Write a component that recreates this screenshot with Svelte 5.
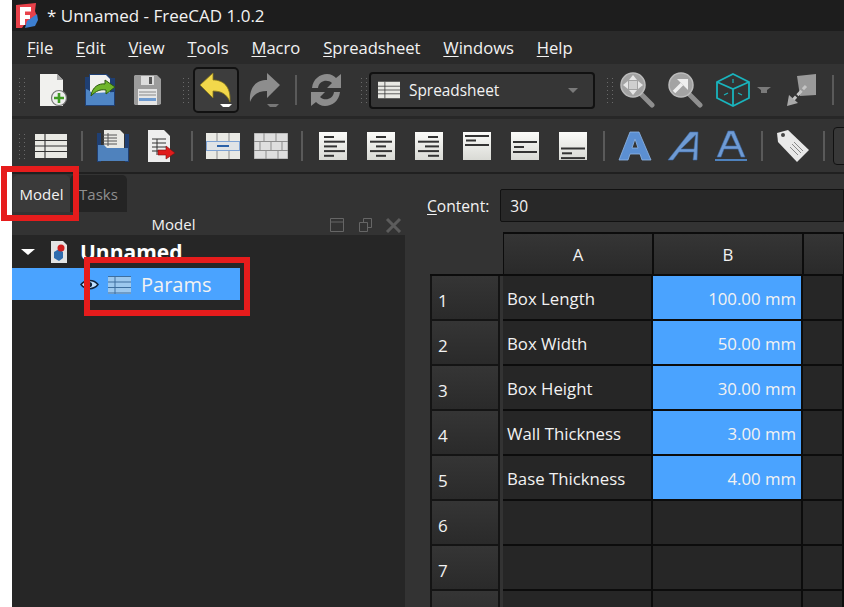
<script>
	// FreeCAD spreadsheet window with two red call-out boxes on top
	const menus = [
		['F', 'ile'], ['E', 'dit'], ['V', 'iew'], ['T', 'ools'],
		['M', 'acro'], ['S', 'preadsheet'], ['W', 'indows'], ['H', 'elp']
	];

	const aligns = [
		{ top: 4, step: 4.7, lines: [[5, 15], [5, 26], [5, 18], [5, 26], [5, 15]] },
		{ top: 4, step: 4.7, lines: [[9, 19], [3, 25], [9, 19], [3, 25], [9, 19]] },
		{ top: 4, step: 4.7, lines: [[13, 23], [3, 24], [10, 24], [3, 24], [13, 24]] },
		{ top: 3, step: 4.5, lines: [[2, 26], [3, 13], [2, 26]] },
		{ top: 9, step: 5, lines: [[2, 26], [3, 13], [2, 26]] },
		{ top: 15.500, step: 4.8, lines: [[2, 26], [3, 13], [2, 26]] }
	];

	const rows = [
		['1', 'Box Length', '100.00 mm'],
		['2', 'Box Width', '50.00 mm'],
		['3', 'Box Height', '30.00 mm'],
		['4', 'Wall Thickness', '3.00 mm'],
		['5', 'Base Thickness', '4.00 mm'],
		['6', '', ''],
		['7', '', ''],
		['', '', '']
	];
</script>

{#snippet grip()}
	<svg class="grip" width="6" height="26" viewBox="0 0 6 26">
		{#each [1, 5, 9, 13, 17, 21, 25] as y}
			<rect x="0" {y} width="1" height="1" fill="#6a6a6a" />
			<rect x="5" {y} width="1" height="1" fill="#6a6a6a" />
		{/each}
	</svg>
{/snippet}

{#snippet tablet(w, h)}
	<svg width={w} height={h} viewBox="0 0 32 24">
		<rect width="32" height="24" fill="#e9e9e4" />
		<path d="M0 6.500h32M0 12h32M0 17.500h32M10 0v24" stroke="#333" stroke-width="1.100" />
	</svg>
{/snippet}

{#snippet lens()}
	<path d="M21 21L33 33" stroke="#8f8f8f" stroke-width="5" stroke-linecap="round" />
	<circle cx="14" cy="13" r="12" fill="#a3a3a3" stroke="#bcbcbc" stroke-width="1.500" />
{/snippet}

<div class="win">
	<header class="titlebar">
		<svg width="22" height="25" viewBox="0 0 22 25">
			<path d="M0 2L20 0L19 8L21 14L17 22L8 22L6 25L0 25Z" fill="#e8414a" />
			<path d="M9 25L11 18L21 11L22 17L19 23Z" fill="#3d7fd1" />
			<path d="M4 4H15V8.500H9V12H14V16H9V22H4Z" fill="#fff" />
		</svg>
		<span>* Unnamed - FreeCAD 1.0.2</span>
	</header>

	<nav class="menubar">
		{#each menus as [key, rest]}
			<span><u>{key}</u>{rest}</span>
		{/each}
	</nav>

	<div class="toolbar one">
		{@render grip()}
		<div class="group first">
			<div class="tool">
				<svg width="30" height="34" viewBox="0 0 30 34">
					<path d="M1 1H18L24 7V33H1Z" fill="#f1f1ee" />
					<path d="M18 1V7H24Z" fill="#a5a5a5" />
					<circle cx="20" cy="25" r="7.500" fill="#eee" stroke="#777" stroke-width="1.200" />
					<path d="M20 20V30M15 25H25" stroke="#3f9a22" stroke-width="2.600" />
				</svg>
			</div>
			<div class="tool">
				<svg width="33" height="34" viewBox="0 0 33 34">
					<path d="M1 4H5V1H23L27 5H31V33H1Z" fill="#1f3f73" />
					<path d="M6 2H22L26 6V20H6Z" fill="#f0f0ee" />
					<path d="M2 16C6 17 8 21 10 20L30 19V32H2Z" fill="#4f86c6" />
					<path d="M7 23C8 14 15 10 21 11V7L31 14L22 21V17C16 16 12 18 7 23Z" fill="#6fb52b" stroke="#2d5a10" stroke-width="1" />
				</svg>
			</div>
			<div class="tool">
				<svg width="29" height="32" viewBox="0 0 29 32">
					<path d="M2 1H24L28 5V30L26 31H2L1 30V2Z" fill="#9c9c9c" />
					<rect x="8" y="2" width="13" height="9" fill="#ddd" />
					<rect x="16" y="3" width="3" height="7" fill="#555" />
					<rect x="5" y="15" width="19" height="16" fill="#e5e5e5" />
					<path d="M6 18H23M6 21H23" stroke="#888" />
					<rect x="6" y="24" width="17" height="3" fill="#6f9bd0" />
				</svg>
			</div>
		</div>
		<div class="group gap-lg">{@render grip()}</div>
		<div class="group gap-sm">
			<div class="tool pressed">
				<svg width="34" height="38" viewBox="0 0 34 38">
					<path d="M1 14L14 2V9C24 9 32 15 31 31C28 23 22 20 14 20V27Z" fill="#f2d84b" stroke="#8a7a1c" stroke-width=".8" />
					<path d="M21 33H33L30 36H24Z" fill="#fff" />
				</svg>
			</div>
			<div class="tool">
				<svg width="34" height="38" viewBox="0 0 34 38">
					<path d="M32 14L19 2V9C9 9 1 15 2 31C5 23 11 20 19 20V27Z" fill="#8d8d8d" />
					<path d="M19 33H31L28 36H22Z" fill="#777" />
				</svg>
			</div>
		</div>
		<i class="sep"></i>
		<div class="tool refresh">
			<svg width="32" height="34" viewBox="0 0 32 34">
				<path d="M2 15C3 6 10 1 17 1C21 1 24 3 26 5L31 1V15H17L22 10C18 6 9 7 8 15Z" fill="#8c8c8c" />
				<path d="M30 19C29 28 22 33 15 33C11 33 8 31 6 29L1 33V19H15L10 24C14 28 23 27 24 19Z" fill="#8c8c8c" />
			</svg>
		</div>
		<div class="group gap-lg">{@render grip()}</div>
		<div class="combo">
			{@render tablet(22, 18)}
			<span>Spreadsheet</span>
			<svg class="caret" width="10" height="5" viewBox="0 0 10 5"><path d="M0 0H10L5 5Z" fill="#7a7a7a" /></svg>
		</div>
		<div class="group gap-lg">{@render grip()}</div>
		<div class="group">
			<div class="tool">
				<svg width="36" height="36" viewBox="0 0 36 36">
					{@render lens()}
					<rect x="10" y="9" width="8" height="8" fill="#cfcfcf" />
					<path d="M14 3L18 8H10ZM14 23L18 18H10ZM4 13L9 9V17ZM24 13L19 9V17Z" fill="#e6e6e6" />
				</svg>
			</div>
			<div class="tool">
				<svg width="36" height="36" viewBox="0 0 36 36">
					{@render lens()}
					<path d="M7 20L15 12" stroke="#eee" stroke-width="3.500" />
					<path d="M10 7H21V18Z" fill="#eee" />
				</svg>
			</div>
			<div class="tool">
				<svg width="34" height="34" viewBox="0 0 34 34">
					<path d="M17 1L33 9V25L17 33L1 25V9Z" fill="none" stroke="#19b4bd" stroke-width="1.800" />
					<path d="M1 9L17 16L33 9M17 16V33" fill="none" stroke="#19b4bd" stroke-width="1.800" />
					<path d="M17 6V10M8 22L12 20M26 22L22 20" stroke="#19b4bd" stroke-width="1.200" />
				</svg>
			</div>
			<div class="tool narrow">
				<svg width="14" height="7" viewBox="0 0 14 7"><path d="M0 0H14L10 3V6H4V3Z" fill="#7a7a7a" /></svg>
			</div>
			<div class="group gap-md">
				<div class="tool">
					<svg width="32" height="34" viewBox="0 0 32 34">
						<path d="M11 3L30 1V22L14 23Z" fill="#9a9a9a" />
						<path d="M6 28L20 13" stroke="#c4c4c4" stroke-width="3" stroke-dasharray="6 2" />
						<path d="M1 33L3 22L12 30Z" fill="#a9a9a9" />
					</svg>
				</div>
			</div>
			<i class="sep"></i>
		</div>
	</div>

	<div class="toolbar two">
		{@render grip()}
		<div class="group tight">
			<div class="tool">{@render tablet(32, 26)}</div>
			<i class="sep"></i>
			<div class="tool">
				<svg width="34" height="32" viewBox="0 0 34 32">
					<path d="M1 3H5V32H33V4H29V32H1Z" fill="#1f3f73" />
					<path d="M8 0H24L28 4V18H8Z" fill="#e9e9e4" />
					<path d="M7 5H21M7 8H21M7 11H21M7 14H21M12 3V16" stroke="#555" />
					<path d="M2 15H8L11 18H32V31H2Z" fill="#4f82bd" />
				</svg>
			</div>
			<div class="tool">
				<svg width="27" height="32" viewBox="0 0 27 32">
					<path d="M0 0H16L22 6V32H0Z" fill="#eee" />
					<path d="M4 9H18M4 13H18M4 17H18M4 21H14M9 9V25" stroke="#333" />
					<path d="M10 20H18V16L27 23L18 29V25H10Z" fill="#e01c1c" stroke="#7a1010" stroke-width=".6" />
				</svg>
			</div>
			<i class="sep"></i>
			<div class="tool">
				<svg width="34" height="26" viewBox="0 0 34 26">
					<rect width="34" height="26" fill="#e9e9e4" />
					<path d="M0 8.500H34M0 17.500H34M11 0V26M23 0V26" stroke="#8d8d8d" />
					<rect x=".5" y="8.500" width="33" height="9" fill="#dfe3e6" stroke="#7ea3d4" />
					<path d="M11 13H23" stroke="#2c62a8" stroke-width="2" />
				</svg>
			</div>
			<div class="tool">
				<svg width="34" height="26" viewBox="0 0 34 26">
					<rect width="34" height="26" fill="#dedede" stroke="#999" />
					<path d="M0 8.500H34M0 17.500H34M10 0V8M22 0V8M6 9V17M17 9V17M28 9V17M12 18V26M24 18V26" stroke="#8d8d8d" />
				</svg>
			</div>
			<i class="sep"></i>
			{#each aligns as a, n}
				<div class="tool">
					<svg width="28" height="28" viewBox="0 0 28 28">
						<defs>
							<linearGradient id={'paper' + n} x1="0" y1="0" x2="0" y2="1">
								<stop offset="0" stop-color="#fbfbf9" />
								<stop offset="1" stop-color="#d9dad5" />
							</linearGradient>
						</defs>
						<rect width="28" height="28" fill={'url(#paper' + n + ')'} />
						{#each a.lines as [x1, x2], i}
							<rect x={x1} y={a.top + i * a.step} width={x2 - x1} height="2" fill="#333" />
						{/each}
					</svg>
				</div>
			{/each}
			<i class="sep"></i>
			<div class="tool">
				<svg width="34" height="32" viewBox="0 0 34 32">
					<path d="M1 30L12 2H21L33 30H24L22 24H12L10 30ZM14 18H20L17 9Z" fill="#5b8fd2" stroke="#8fb6e6" stroke-width=".8" />
				</svg>
			</div>
			<div class="tool">
				<svg width="34" height="32" viewBox="0 0 34 32">
					<path d="M2 30L24 2H32L31 30H27L28 22H13L7 30ZM15 19H28L29.500 5Z" fill="#6f9bd4" stroke="#3a69a8" stroke-width=".6" />
				</svg>
			</div>
			<div class="tool">
				<svg width="34" height="32" viewBox="0 0 34 32">
					<path d="M3 27L14 1H20L31 27H27L24 19H10L7 27ZM11.500 16H22.500L17 4Z" fill="#6f9bd4" stroke="#3a69a8" stroke-width=".6" />
					<rect x="1" y="29" width="32" height="2" fill="#4f82bd" />
				</svg>
			</div>
			<i class="sep"></i>
			<div class="tool">
				<svg width="34" height="34" viewBox="0 0 34 34">
					<path d="M1 4L12 1L33 21L21 33L2 13Z" fill="#e8e8e8" />
					<circle cx="7" cy="6" r="2" fill="#444" />
					<path d="M16 15L25 24M14 18L22 26M18 13L27 22" stroke="#888" />
				</svg>
			</div>
			<i class="sep"></i>
			<div class="stub"></div>
		</div>
	</div>

	<main class="body">
		<section class="left">
			<div class="tabs">
				<div class="tab active">Model</div>
				<div class="tab">Tasks</div>
			</div>
			<div class="dock">
				<span class="dock-title">Model</span>
				<svg class="dock-icons" width="73" height="16" viewBox="0 0 73 16">
					<path d="M1.500 1.500H14.500V14.500H1.500ZM1.500 5H14.500" fill="none" stroke="#666" />
					<path d="M30.500 5.500H38.500V14.500H30.500ZM34.500 5.500V1.500H42.500V10.500H38.500" fill="none" stroke="#666" />
					<path d="M58 2L71 15M71 2L58 15" stroke="#5c5c5c" stroke-width="3" />
				</svg>
			</div>
			<div class="tree">
				<div class="tree-row root">
					<svg width="14" height="6" viewBox="0 0 14 6"><path d="M0 0H14L7 6Z" fill="#fff" /></svg>
					<svg class="doc" width="16" height="22" viewBox="0 0 16 22">
						<path d="M0 0H12L16 4V22H0Z" fill="#e4e4e4" />
						<path d="M3 11L8 8L12 11V17L8 20L3 17Z" fill="#2f6cae" />
						<circle cx="10" cy="7" r="3.500" fill="#d01f1f" />
					</svg>
					<strong>Unnamed</strong>
				</div>
				<div class="tree-row picked">
					<svg class="eye" width="19" height="11" viewBox="0 0 19 11">
						<path d="M1 5.500C5 0 14 0 18 5.500C14 11 5 11 1 5.500Z" fill="#bfe0ff" stroke="#10243c" stroke-width="1.500" />
						<circle cx="9.500" cy="5.500" r="2.600" fill="#10243c" />
					</svg>
					<svg class="sheet-icon" width="23" height="18" viewBox="0 0 23 18">
						<rect width="23" height="18" fill="#9cc8ee" />
						<path d="M0 .5H23M0 6H23M0 11.500H23M0 17H23M7 0V18" stroke="#3e6f9f" />
					</svg>
					<span>Params</span>
				</div>
			</div>
		</section>

		<section class="right">
			<div class="content">
				<label for="cell"><u>C</u>ontent:</label>
				<input id="cell" value="30" readonly />
			</div>
			<div class="sheet">
				<div class="corner"></div>
				<div class="colhead">A</div>
				<div class="colhead">B</div>
				<div class="colhead"></div>
				{#each rows as [num, name, value]}
					<div class="rowhead">{num}</div>
					<div class="cell">{name}</div>
					<div class="cell num" class:blue={value}>{value}</div>
					<div class="cell"></div>
				{/each}
			</div>
		</section>
	</main>

	<div class="callout tab-mark"></div>
	<div class="callout row-mark"></div>
</div>

<style>
	:global(body) {
		background: #fff;
		overflow: hidden;
	}

	.win {
		position: relative;
		height: 607px;
		overflow: hidden;
		padding-left: 12px;
		display: flex;
		flex-direction: column;
		font-family: 'Open Sans', 'Noto Sans', sans-serif;
		color: #f2f2f2;
		background: #fff;
	}

	.titlebar {
		height: 31px;
		flex: none;
		display: flex;
		align-items: center;
		gap: 9px;
		padding-left: 4px;
		background: #1d1d1d;
		font-size: 17px;
	}

	.menubar {
		height: 33px;
		flex: none;
		display: flex;
		align-items: center;
		gap: 22.800px;
		padding-left: 15px;
		background: #2a2a2a;
		font-size: 16.600px;
	}

	u {
		text-underline-offset: 2px;
		text-decoration-thickness: 1px;
	}

	.toolbar {
		flex: none;
		display: flex;
		align-items: center;
		padding-left: 7px;
		background: #333;
	}

	.toolbar.one {
		height: 52px;
	}

	.toolbar.two {
		height: 53px;
		border-top: 3px solid #272727;
		border-bottom: 2px solid #202020;
	}

	.grip {
		flex: none;
	}

	.group {
		display: flex;
		align-items: center;
		flex: none;
	}

	.first {
		margin-left: 5px;
	}

	.first .tool {
		width: 47px;
	}

	.tight {
		margin-left: 2px;
	}

	.gap-lg {
		margin-left: 12px;
	}

	.gap-md {
		margin-left: 7px;
	}

	.gap-sm {
		margin-left: 4px;
	}

	.tool {
		width: 48px;
		display: flex;
		align-items: center;
		justify-content: center;
		flex: none;
	}

	.tool.narrow {
		width: 14px;
	}

	.tool.refresh {
		width: 46px;
	}

	.tool.pressed {
		width: 46px;
		height: 46px;
		box-sizing: border-box;
		margin-right: 2px;
		background: #3d3d3d;
		border: 2px solid #111;
		border-radius: 5px;
	}

	.sep {
		width: 2px;
		height: 30px;
		margin: 0 6px;
		background: #5a5a5a;
		flex: none;
	}

	.combo {
		width: 226px;
		height: 37px;
		box-sizing: border-box;
		margin-left: 2px;
		padding: 0 15px 0 7px;
		display: flex;
		align-items: center;
		gap: 9px;
		flex: none;
		background: #363636;
		border: 2px solid #111;
		border-radius: 4px;
		font-size: 15.400px;
	}

	.caret {
		margin-left: auto;
	}

	.stub {
		width: 60px;
		height: 36px;
		margin-left: 2px;
		background: #383838;
		border: 1px solid #111;
		border-radius: 4px;
		flex: none;
	}

	.body {
		flex: 1;
		min-height: 0;
		display: flex;
		background: #333;
	}

	.left {
		width: 393px;
		flex: none;
		display: flex;
		flex-direction: column;
	}

	.tabs {
		height: 38px;
		display: flex;
		align-items: flex-end;
		padding-left: 1px;
		font-size: 15px;
	}

	.tab {
		width: 57px;
		height: 37px;
		box-sizing: border-box;
		display: flex;
		align-items: center;
		justify-content: center;
		border-radius: 5px 5px 0 0;
		background: #242424;
		color: #8f8f8f;
	}

	.tab.active {
		background: #3a3a3a;
		color: #f2f2f2;
	}

	.dock {
		position: relative;
		height: 23px;
		display: flex;
		align-items: center;
		justify-content: center;
		font-size: 15px;
		padding-right: 70px;
	}

	.dock-icons {
		position: absolute;
		right: 3px;
		top: 5px;
	}

	.tree {
		flex: 1;
		background: #262626;
	}

	.tree-row {
		display: flex;
		align-items: center;
	}

	.root {
		height: 33px;
		padding-left: 9px;
		font-size: 21px;
	}

	.doc {
		margin-left: 16px;
	}

	.root strong {
		margin-left: 13px;
		font-weight: 700;
		color: #fff;
	}

	.picked {
		width: 228px;
		height: 32px;
		padding: 1px 0 0 68px;
		box-sizing: border-box;
		background: #4aa3ff;
		font-size: 20px;
	}

	.sheet-icon {
		margin-left: 9px;
	}

	.picked span {
		margin-left: 10px;
	}

	.right {
		flex: 1;
		min-width: 0;
		padding-top: 15px;
		padding-left: 25px;
	}

	.content {
		display: flex;
		align-items: center;
		gap: 11px;
		margin-left: -3px;
		height: 33px;
		font-size: 15.600px;
	}

	.content input {
		flex: 1;
		min-width: 0;
		height: 33px;
		box-sizing: border-box;
		padding: 0 9px;
		background: #282828;
		border: 1px solid #111;
		border-radius: 2px 0 0 2px;
		color: #f2f2f2;
		font: inherit;
		font-size: 15.500px;
		outline: none;
	}

	.sheet {
		display: grid;
		grid-template-columns: 73px 150px 150px 1fr;
		grid-auto-rows: 45px;
		grid-template-rows: 44px;
		margin-top: 10px;
		font-size: 16.800px;
	}

	.corner {
		background: #333;
		border-bottom: 2px solid #0c0c0c;
	}

	.colhead {
		display: flex;
		align-items: center;
		justify-content: center;
		background: linear-gradient(#353535, #2a2a2a);
		border: solid #0c0c0c;
		border-width: 2px 1px 2px 1px;
	}

	.rowhead {
		display: flex;
		align-items: center;
		padding: 5px 0 0 6px;
		margin-right: 3px;
		background: linear-gradient(#353535, #2a2a2a);
		border: 1px solid #141414;
		border-width: 0 2px 2px 2px;
		box-sizing: border-box;
		font-size: 17px;
	}

	.cell {
		display: flex;
		align-items: center;
		padding: 1px 5px 0 4px;
		background: #262626;
		border-bottom: 2px solid #0c0c0c;
		border-right: 2px solid #0c0c0c;
		box-sizing: border-box;
	}

	.num {
		justify-content: flex-end;
	}

	.blue {
		background: #4aa3ff;
	}

	.callout {
		position: absolute;
		border: 6px solid #e61c1c;
		box-sizing: border-box;
	}

	.tab-mark {
		left: 1px;
		top: 166px;
		width: 78px;
		height: 55px;
	}

	.row-mark {
		left: 84px;
		top: 257px;
		width: 166px;
		height: 59px;
	}
</style>
